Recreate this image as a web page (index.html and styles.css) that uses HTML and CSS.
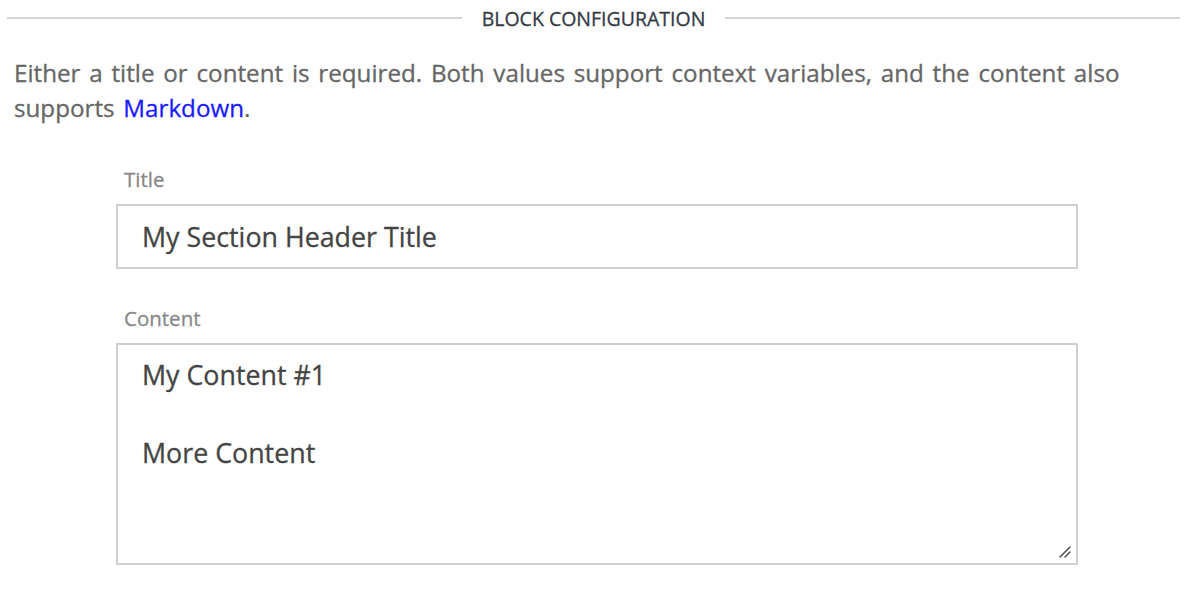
FILE: index.html
```html
<!DOCTYPE html>
<html>
<head>
<meta charset="utf-8">
<link rel="stylesheet" href="styles.css">
</head>
<body>
<div class="page">
  <div class="divider">
    <span class="rule"></span>
    <span class="divider-text">BLOCK CONFIGURATION</span>
    <span class="rule"></span>
  </div>
  <p class="help"><span class="help-line">Either a title or content is required. Both values support context variables, and the content also</span><span class="help-line">supports <a href="#" class="link">Markdown</a>.</span></p>
  <div class="fields">
    <div class="field">
      <label class="label">Title</label>
      <div class="input">My Section Header Title</div>
    </div>
    <div class="field">
      <label class="label">Content</label>
      <div class="textarea">
        <div class="line">My Content #1</div>
        <div class="line">&nbsp;</div>
        <div class="line">More Content</div>
        <svg class="grip" width="14" height="14" viewBox="0 0 14 14"><path d="M2 12 L12 2 M7 12 L12 7" stroke="#555" stroke-width="1.6" stroke-linecap="round"/></svg>
      </div>
    </div>
  </div>
</div>
</body>
</html>
```
FILE: styles.css
```css
html, body { margin: 0; padding: 0; background: #fff; }
body { font-family: "Open Sans", "Noto Sans", sans-serif; -webkit-text-stroke: 0.3px currentColor; }
.page { padding: 0 20px 0 7px; }
.divider {
  display: flex;
  align-items: center;
  gap: 20px;
  height: 36px;
}
.rule { flex: 1; height: 2px; background: #d4d4d4; }
.divider-text {
  font-size: 19.5px;
  color: #333a45;
}
.help {
  margin: 19px 0 0 7px;
  font-size: 24.2px;
  line-height: 35px;
  color: #666;
  word-spacing: 2.5px;
}
.help-line { display: block; }
.link { color: #1a1aff; text-decoration: none; }
.fields { padding: 0 0 0 109px; width: 962px; }
.field { margin-top: 36px; }
.field:first-child { margin-top: 41px; }
.label {
  display: block;
  font-size: 20.5px;
  color: #888;
  padding-left: 8px;
  line-height: 26px;
  margin-bottom: 12px;
}
.input, .textarea {
  border: 2px solid #d0d0d0;
  box-sizing: border-box;
  color: #444;
  font-size: 26.8px;
  padding: 0 24px;
}
.input {
  height: 65px;
  line-height: 61px;
}
.textarea {
  position: relative;
  height: 222px;
  padding-top: 10px;
}
.line { line-height: 39px; }
.grip { position: absolute; right: 4px; bottom: 4px; }
```
